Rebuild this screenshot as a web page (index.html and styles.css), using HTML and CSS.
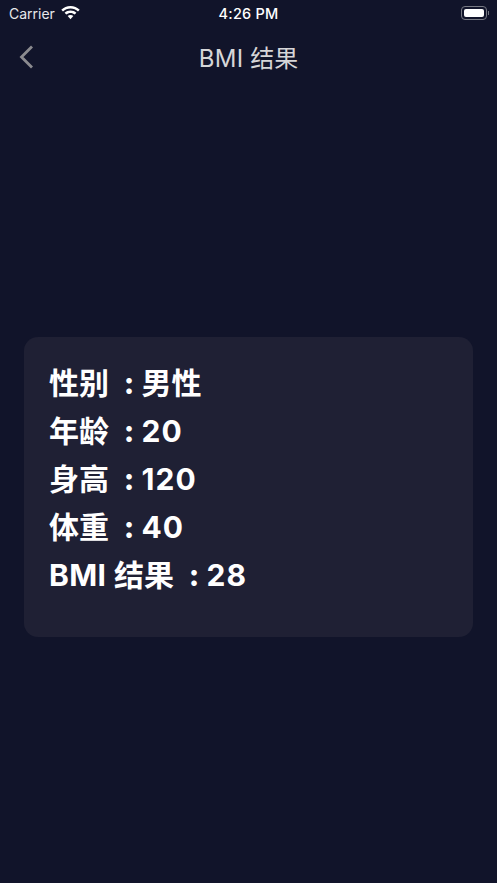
FILE: index.html
```html
<!DOCTYPE html>
<html lang="zh-CN">
<head>
  <meta charset="utf-8">
  <title>BMI 结果</title>
  <meta name="viewport" content="width=device-width, initial-scale=1.0">
  <link rel="stylesheet" href="styles.css">
</head>
<body>
  <!-- status bar -->
  <div class="status-bar">
    <div class="status-left">
      <span class="carrier">Carrier</span>
      <svg class="wifi" width="19" height="14" viewBox="0 0 19 14">
        <path d="M9.500 0C5.900 0 2.700 1.400.3 3.700l1.700 1.800C4 3.600 6.600 2.500 9.500 2.500s5.500 1.100 7.500 3l1.700-1.800C16.300 1.400 13.100 0 9.500 0z" fill="#fff"/>
        <path d="M9.500 4.500c-2.300 0-4.400.9-5.900 2.300l1.700 1.800c1.100-1 2.600-1.700 4.200-1.700s3.100.7 4.200 1.700l1.700-1.800c-1.500-1.400-3.600-2.300-5.900-2.300z" fill="#fff"/>
        <path d="M9.500 9c-1.100 0-2.100.4-2.800 1.100l2.800 3.100 2.800-3.100C11.600 9.400 10.600 9 9.500 9z" fill="#fff"/>
      </svg>
    </div>
    <span class="clock">4:26 PM</span>
    <div class="battery">
      <div class="battery-body"><div class="battery-fill"></div></div>
      <div class="battery-cap"></div>
    </div>
  </div>

  <!-- nav bar -->
  <div class="nav-bar">
    <svg class="back" width="16" height="26" viewBox="0 0 16 26">
      <path d="M14 2.500 3.500 13 14 23.500" fill="none" stroke="#8b8b8f" stroke-width="2.800"/>
    </svg>
    <h1 class="nav-title"><span class="latin">BMI</span> 结果</h1>
  </div>

  <!-- result card -->
  <main class="content">
    <div class="card">
      <p class="row">性别 <span class="colon">:</span>男性</p>
      <p class="row">年龄 <span class="colon">:</span><span class="num">20</span></p>
      <p class="row">身高 <span class="colon">:</span><span class="num">120</span></p>
      <p class="row">体重 <span class="colon">:</span><span class="num">40</span></p>
      <p class="row"><span class="abbr">BMI</span> 结果 <span class="colon">:</span><span class="num">28</span></p>
    </div>
  </main>
</body>
</html>
```

FILE: styles.css
```css
* {
  margin: 0;
  padding: 0;
  box-sizing: border-box;
}
body {
  width: 497px;
  height: 883px;
  overflow: hidden;
  background: #11142a;
  color: #fff;
  font-family: Inter, "Noto Sans CJK SC", sans-serif;
}
/* status bar */
.status-bar {
  display: flex;
  align-items: center;
  justify-content: space-between;
  position: relative;
  height: 26px;
  padding: 0 8px 0 9px;
}
.status-left {
  display: flex;
  align-items: center;
  gap: 6px;
}
.carrier {
  font-size: 14px;
  color: #e8e8ea;
}
.clock {
  position: absolute;
  left: 0;
  right: 0;
  text-align: center;
  font-size: 14.500px;
  font-weight: 500;
  letter-spacing: 0.200px;
}
.battery {
  display: flex;
  align-items: center;
}
.battery-body {
  width: 26px;
  height: 14px;
  padding: 2px;
  border: 1px solid #777983;
  border-radius: 4px;
}
.battery-fill {
  height: 100%;
  background: #fff;
  border-radius: 2px;
}
.battery-cap {
  width: 1.500px;
  height: 4px;
  margin-left: 1px;
  background: #777983;
}
/* nav bar */
.nav-bar {
  display: flex;
  align-items: center;
  justify-content: center;
  position: relative;
  height: 62px;
}
.back {
  position: absolute;
  left: 18px;
  top: 18px;
}
.nav-title {
  font-size: 24px;
  font-weight: 400;
  color: #d6d6d8;
  margin-top: -2px;
}
.nav-title .latin {
  letter-spacing: 0.300px;
}
/* result card */
.content {
  padding: 249px 24px 0;
}
.card {
  height: 300px;
  padding: 22px 25px;
  background: #1f2034;
  border-radius: 14px;
}
.row {
  font-size: 30px;
  font-weight: 600;
  line-height: 48px;
  white-space: nowrap;
}
/* colon sits in the middle of a wide box */
.colon {
  display: inline-block;
  width: 25px;
  text-align: center;
  font-weight: 800;
}
.num {
  font-weight: 700;
  letter-spacing: 1px;
}
.abbr {
  font-weight: 700;
  letter-spacing: 0.400px;
}
```
